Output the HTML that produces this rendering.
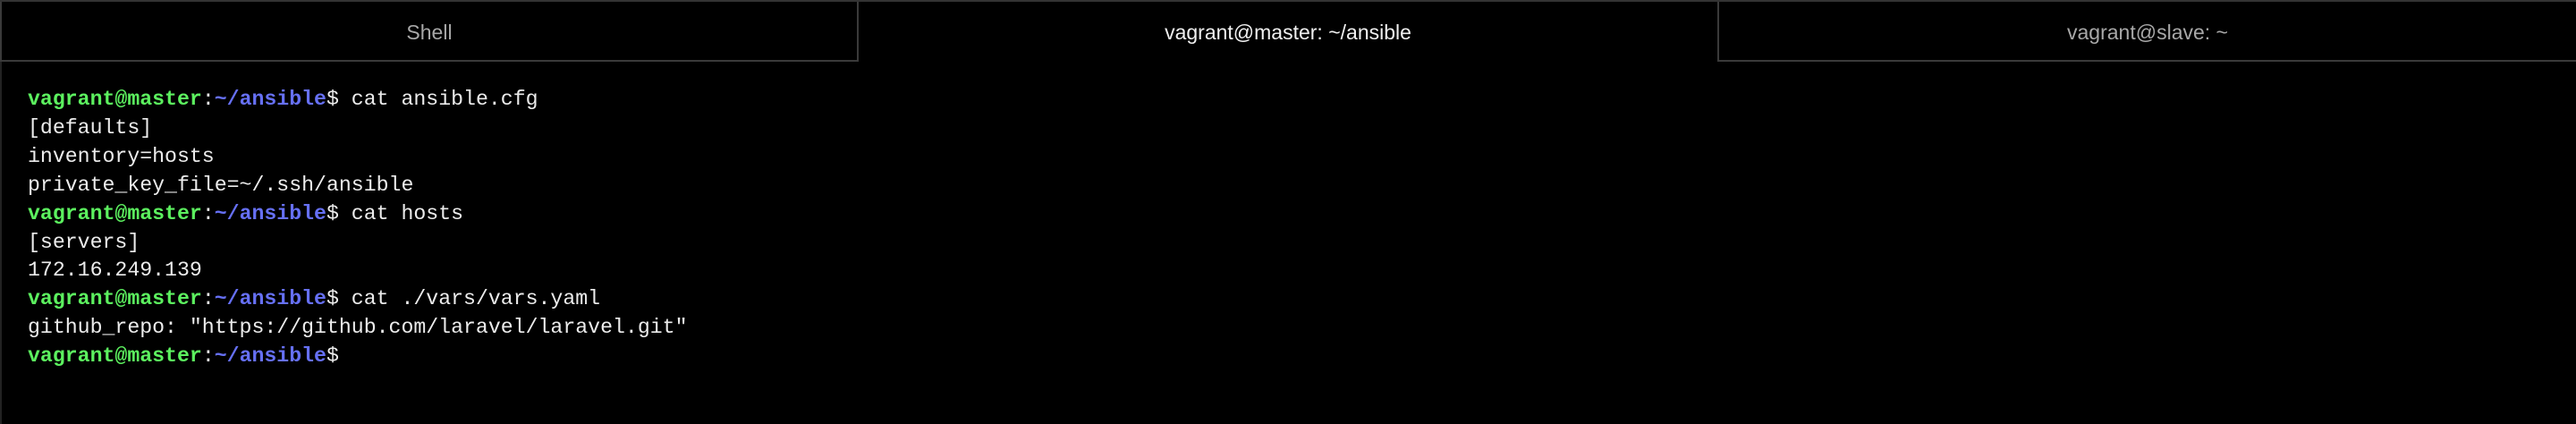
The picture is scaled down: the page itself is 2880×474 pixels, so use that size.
<!DOCTYPE html>
<html><head><meta charset="utf-8"><style>
html,body{margin:0;padding:0;background:#000;width:2880px;height:474px;overflow:hidden}
.tabs{position:absolute;left:0;top:0;width:2880px;height:69px;border-top:2px solid #333;box-sizing:border-box}
.tab{position:absolute;top:0;height:67px;width:960px;font-family:"Liberation Sans",sans-serif;font-size:23px;text-align:center;line-height:68px;color:#a8a8a8;box-sizing:border-box}
.t1{left:0;border-bottom:2px solid #3a3a3a;border-right:2px solid #3a3a3a;border-left:2px solid #3a3a3a}
.t2{left:960px;color:#f0f0f0}
.t3{left:1920px;border-bottom:2px solid #3a3a3a;border-left:2px solid #3a3a3a;width:960px}
.side{position:absolute;left:0;top:69px;width:2px;height:405px;background:#222}
pre{position:absolute;left:31px;top:96px;margin:0;font-family:"Liberation Mono",monospace;font-size:23.2px;line-height:31.9px;color:#ececec}
.g{color:#5cf15f;font-weight:bold}.b{color:#6670f5;font-weight:bold}
</style></head><body>
<div class="tabs">
<div class="tab t1">Shell</div>
<div class="tab t2">vagrant@master: ~/ansible</div>
<div class="tab t3">vagrant@slave: ~</div>
</div>
<div class="side"></div>
<pre><span class="g">vagrant@master</span>:<span class="b">~/ansible</span>$ cat ansible.cfg
[defaults]
inventory=hosts
private_key_file=~/.ssh/ansible
<span class="g">vagrant@master</span>:<span class="b">~/ansible</span>$ cat hosts
[servers]
172.16.249.139
<span class="g">vagrant@master</span>:<span class="b">~/ansible</span>$ cat ./vars/vars.yaml
github_repo: "https://github.com/laravel/laravel.git"
<span class="g">vagrant@master</span>:<span class="b">~/ansible</span>$</pre>
</body></html>
